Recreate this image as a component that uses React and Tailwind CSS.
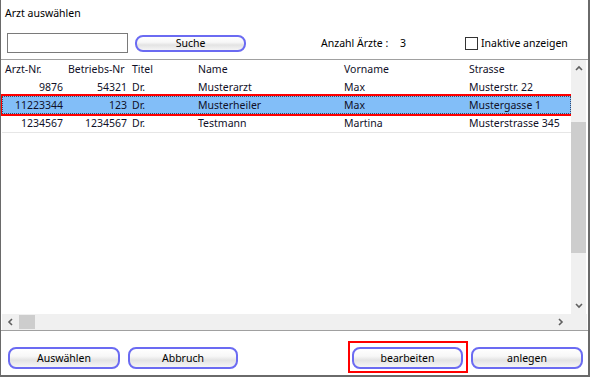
import React from "react";

const rows = [
  ["9876", "54321", "Dr.", "Musterarzt", "Max", "Musterstr. 22"],
  ["11223344", "123", "Dr.", "Musterheiler", "Max", "Mustergasse 1"],
  ["1234567", "1234567", "Dr.", "Testmann", "Martina", "Musterstrasse 345"],
];

function Btn({ children, className }) {
  return (
    <div
      className={
        "flex items-center justify-center rounded-[8px] border-2 border-[#6b6bf2] bg-[linear-gradient(#ffffff_0%,#f7f7f7_40%,#e3e3e3_62%,#f5f5f5_100%)] text-black " +
        className
      }
    >
      {children}
    </div>
  );
}

function Chevron({ dir }) {
  const pts = {
    up: "1,5 4,2 7,5",
    down: "1,2 4,5 7,2",
    left: "5,1 2,4 5,7",
    right: "2,1 5,4 2,7",
  }[dir];
  return (
    <svg width="8" height="8" viewBox="0 0 8 8">
      <polyline points={pts} fill="none" stroke="#606060" strokeWidth="1.6" />
    </svg>
  );
}

function Row({ r, selected }) {
  return (
    <div
      className={
        selected
          ? "relative z-10 grid h-[18px] grid-cols-[64px_64px_65px_147px_124px_1fr] items-center bg-[#82bef8] outline-2 outline-[#ff0000] text-[#101028]"
          : "grid h-[18px] grid-cols-[64px_64px_65px_147px_124px_1fr] items-center text-[#101028]"
      }
    >
      {selected && (
        <div className="pointer-events-none absolute inset-0 border border-dotted border-[#3a4a6a]" />
      )}
      <div className="pr-[3px] text-right">{r[0]}</div>
      <div className="pr-[3px] text-right">{r[1]}</div>
      <div className="pl-[2px]">{r[2]}</div>
      <div className="pl-[3px]">{r[3]}</div>
      <div className="pl-[2px]">{r[4]}</div>
      <div className="whitespace-nowrap pl-[3px]">{r[5]}</div>
    </div>
  );
}

export default function App() {
  return (
    <div className="flex h-[377px] w-[590px] flex-col border-b-2 border-l border-r-2 border-[#6a6a6a] bg-white font-['Noto_Sans',sans-serif] text-[10.5px] leading-none text-black">
      {/* title */}
      <div className="flex h-[26px] items-center pl-[4px]">Arzt auswählen</div>

      {/* search row */}
      <div className="flex h-[33px] items-start pt-[7px]">
        <div className="ml-[6px] h-[20px] w-[121px] border border-[#7a7a7a] bg-white" />
        <Btn className="ml-[7px] mt-[2px] h-[17px] w-[111px]">Suche</Btn>
        <div className="ml-[75px] flex h-[20px] w-[79px] items-center">Anzahl Ärzte :</div>
        <div className="flex h-[20px] w-[65px] items-center">3</div>
        <div className="flex h-[20px] items-center">
          <div className="h-[13px] w-[13px] border border-[#333333] bg-white" />
          <span className="ml-[3px]">Inaktive anzeigen</span>
        </div>
      </div>

      {/* table frame */}
      <div className="flex h-[272px] flex-col border-b border-t border-[#a0a0a0]">
        <div className="flex h-[254px]">
          <div className="w-[570px] overflow-hidden pl-[1px]">
            <div className="grid h-[18px] grid-cols-[64px_64px_65px_147px_124px_1fr] items-center text-[#101028]">
              <div className="pl-[3px]">Arzt-Nr.</div>
              <div className="pl-[2px]">Betriebs-Nr</div>
              <div className="pl-[2px]">Titel</div>
              <div className="pl-[3px]">Name</div>
              <div className="pl-[2px]">Vorname</div>
              <div className="pl-[3px]">Strasse</div>
            </div>
            <Row r={rows[0]} />
            <Row r={rows[1]} selected />
            <Row r={rows[2]} />
            <div className="h-px w-full bg-[#e6e6e6]" />
          </div>
          {/* vertical scrollbar */}
          <div className="flex w-[15px] flex-col bg-[#f0f0f0]">
            <div className="flex h-[17px] items-center justify-center">
              <Chevron dir="up" />
            </div>
            <div className="mt-[45px] h-[131px] w-full bg-[#cdcdcd]" />
            <div className="flex-1" />
            <div className="flex h-[17px] items-center justify-center">
              <Chevron dir="down" />
            </div>
          </div>
        </div>
        {/* horizontal scrollbar */}
        <div className="ml-[1px] flex h-[16px] w-[585px] items-center bg-[#f0f0f0]">
          <div className="flex w-[17px] items-center justify-center">
            <Chevron dir="left" />
          </div>
          <div className="h-[14px] w-[16px] bg-[#cdcdcd]" />
          <div className="flex-1" />
          <div className="mr-[18px] flex w-[17px] items-center justify-center">
            <Chevron dir="right" />
          </div>
        </div>
      </div>

      {/* bottom buttons */}
      <div className="flex items-start pt-[10px]">
        <Btn className="ml-[7px] mt-[6px] h-[22px] w-[112px]">Auswählen</Btn>
        <Btn className="ml-[8px] mt-[6px] h-[22px] w-[110px]">Abbruch</Btn>
        <div className="ml-[110px] h-[32px] w-[120px] border-2 border-[#ff0000] pl-[2px] pt-[4px]">
          <Btn className="h-[22px] w-[111px]">bearbeiten</Btn>
        </div>
        <Btn className="ml-[3px] mt-[6px] h-[22px] w-[112px]">anlegen</Btn>
      </div>
    </div>
  );
}
